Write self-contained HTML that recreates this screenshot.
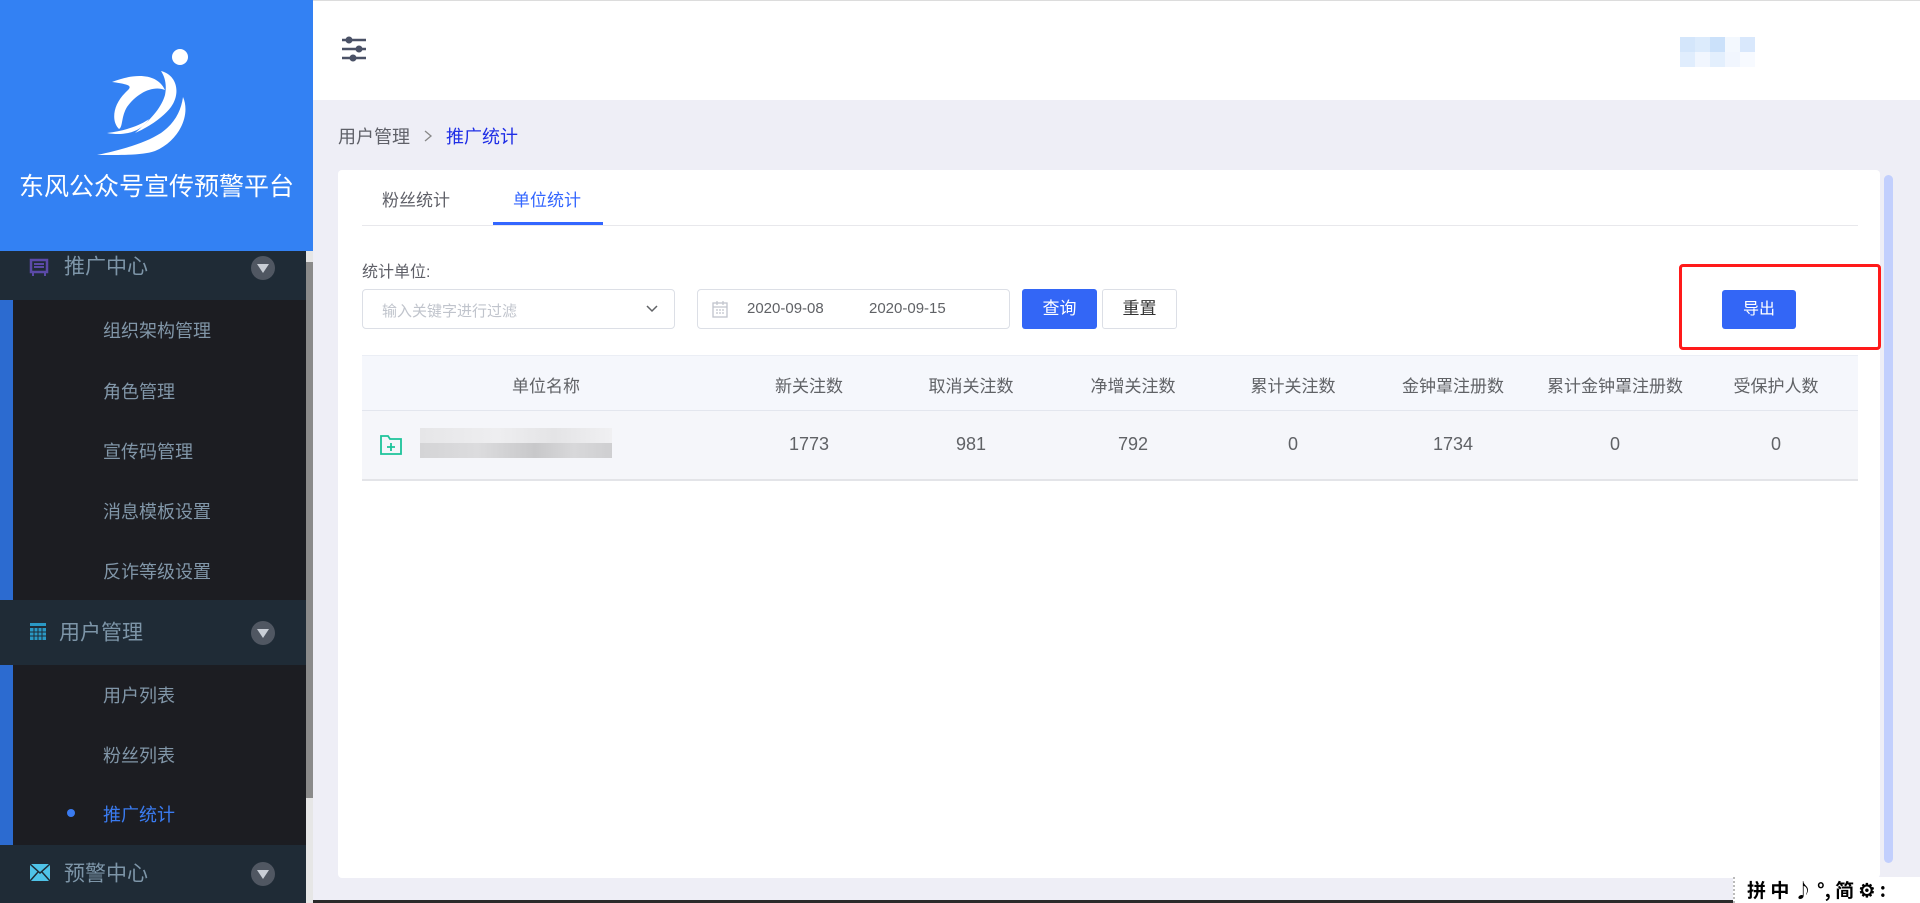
<!DOCTYPE html>
<html><head><meta charset="utf-8"><style>
*{margin:0;padding:0;box-sizing:border-box}
body{width:1920px;height:903px;overflow:hidden;background:#eeeef6;font-family:"Liberation Sans","Noto Sans CJK SC",sans-serif;position:relative}
.a{position:absolute}
.side{left:0;top:0;width:313px;height:903px;background:#1c1d22}
.logo{left:0;top:0;width:313px;height:251px;background:#3381f3}
.title{left:0;top:167px;width:313px;text-align:center;color:#fff;font-size:25px}
.grp{left:0;width:306px;background:#1f2b36;color:#7d95a8;font-size:21px}
.grp span{position:absolute;left:64px;top:50%;transform:translateY(-50%);line-height:1}
.arr{position:absolute;left:251px;top:50%;margin-top:-12px;width:24px;height:24px;border-radius:50%;background:#505762}
.arr:after{content:"";position:absolute;left:6px;top:8px;border-left:6px solid transparent;border-right:6px solid transparent;border-top:9px solid #c9ced6}
.bar{left:0;width:13px;background:#2c6bd0}
.it{left:103px;color:#8196a8;font-size:18px;transform:translateY(-50%)}
.card{left:338px;top:170px;width:1542px;height:708px;background:#fff;border-radius:4px}
.th{color:#606266;font-size:17px;text-align:center;transform:translateX(-50%);white-space:nowrap}
.btn{border-radius:3px;font-size:17px;text-align:center;line-height:39px}
</style></head><body>
<div class="a" style="left:0;top:0;width:1920px;height:1px;background:#dcdcdc"></div>
<div class="a side"></div>
<div class="a logo"></div>
<svg class="a" style="left:95px;top:45px" width="110" height="115" viewBox="0 0 110 115">
<circle cx="85" cy="12" r="8" fill="#fff"/>
<path d="M17 37 C40 28 62 28 70 45 C58 40 42 48 32 62 C26 72 28 82 24 84 C16 76 18 60 30 48 C36 42 40 40 17 37Z" fill="#fff"/>
<path d="M66 26 C82 30 86 48 76 62 C70 70 58 80 40 88 C54 76 66 64 70 50 C72 40 70 32 66 26Z" fill="#fff"/>
<path d="M88 52 C96 70 84 96 60 106 C48 110 34 110 2 110 C30 104 50 98 66 88 C80 78 86 66 88 52Z" fill="#fff"/>
<path d="M12 88 C30 86 46 80 54 74 C48 84 34 92 12 88Z" fill="#fff"/>
</svg>
<div class="a title">东风公众号宣传预警平台</div>
<div class="a" style="left:306px;top:251px;width:7px;height:652px;background:#e6e6e6"></div>
<div class="a" style="left:306px;top:262px;width:7px;height:536px;background:#8a8a8a"></div>

<div class="a grp" style="top:251px;height:49px"><svg class="a" style="left:29px;top:7px" width="20" height="20" viewBox="0 0 20 20"><rect x="2" y="2" width="16" height="12" fill="none" stroke="#5b4aa8" stroke-width="2.5"/><path d="M5 6h10M5 9h10M4 14v4M16 14v4" stroke="#5b4aa8" stroke-width="2"/></svg><span style="top:16px;transform:translateY(-50%)">推广中心</span><div class="arr" style="top:17px"></div></div>
<div class="a bar" style="top:300px;height:300px"></div>
<div class="a it" style="top:330px">组织架构管理</div>
<div class="a it" style="top:391px">角色管理</div>
<div class="a it" style="top:451px">宣传码管理</div>
<div class="a it" style="top:511px">消息模板设置</div>
<div class="a it" style="top:571px">反诈等级设置</div>
<div class="a grp" style="top:600px;height:65px"><svg class="a" style="left:30px;top:23px" width="16" height="17" viewBox="0 0 16 17"><rect x="0" y="0" width="16" height="3" fill="#2a98c4"/><rect x="0" y="5" width="16" height="12" fill="#2a98c4"/><path d="M0 9h16M0 13h16M4 5v12M8 5v12M12 5v12" stroke="#1f2b36" stroke-width="1"/></svg><span style="left:59px">用户管理</span><div class="arr"></div></div>
<div class="a bar" style="top:665px;height:180px"></div>
<div class="a it" style="top:695px">用户列表</div>
<div class="a it" style="top:755px">粉丝列表</div>
<div class="a" style="left:67px;top:809px;width:8px;height:8px;border-radius:50%;background:#3a7bf0"></div>
<div class="a it" style="top:814px;color:#3a7bf0">推广统计</div>
<div class="a grp" style="top:845px;height:58px"><svg class="a" style="left:30px;top:19px" width="20" height="17" viewBox="0 0 20 17"><rect width="20" height="17" fill="#4fc3e8"/><path d="M0 0L10 9L20 0M0 17L8 8M20 17L12 8" stroke="#1f2b36" stroke-width="1.5" fill="none"/></svg><span>预警中心</span><div class="arr"></div></div>

<div class="a" style="left:313px;top:1px;width:1607px;height:99px;background:#fff"></div>
<svg class="a" style="left:340px;top:36px" width="28" height="26" viewBox="0 0 28 26"><g stroke="#4a5166" stroke-width="2.5"><path d="M2 4h24M2 13h24M2 22h24"/></g><g fill="#4a5166"><circle cx="9" cy="4" r="3.5"/><circle cx="19" cy="13" r="3.5"/><circle cx="13" cy="22" r="3.5"/></g></svg>
<div class="a" style="left:1680px;top:37px;width:75px;height:15px;background:linear-gradient(90deg,#d4e6fb 0 20%,#dcebfc 20% 40%,#cbe1fa 40% 60%,#f3f8fe 60% 80%,#d9e8fc 80%)"></div>
<div class="a" style="left:1680px;top:52px;width:75px;height:15px;background:linear-gradient(90deg,#e0edfd 0 20%,#f1f6fe 20% 40%,#e3effd 40% 60%,#f1f6fe 60% 80%,#f7faff 80%)"></div>

<div class="a" style="left:338px;top:123px;font-size:18px;color:#5f6068">用户管理 <svg width="14" height="14" viewBox="0 0 14 14" style="margin:0 6px"><path d="M4 2l6 5-6 5" stroke="#888" stroke-width="1.3" fill="none"/></svg> <span style="color:#1f2ee6">推广统计</span></div>

<div class="a card"></div>
<div class="a" style="left:1884px;top:175px;width:9px;height:688px;border-radius:5px;background:#c2cffd"></div>
<div class="a" style="left:382px;top:186px;font-size:17px;color:#5f6068">粉丝统计</div>
<div class="a" style="left:513px;top:186px;font-size:17px;color:#3366ff">单位统计</div>
<div class="a" style="left:362px;top:225px;width:1496px;height:1px;background:#e8e8ec"></div>
<div class="a" style="left:493px;top:222px;width:110px;height:3px;background:#3366ff"></div>
<div class="a" style="left:362px;top:258px;font-size:16px;color:#5f6068">统计单位:</div>
<div class="a" style="left:362px;top:289px;width:313px;height:40px;border:1px solid #dcdfe6;border-radius:4px"></div>
<div class="a" style="left:382px;top:300px;font-size:15px;color:#c0c4cc">输入关键字进行过滤</div>
<svg class="a" style="left:646px;top:304px" width="12" height="10" viewBox="0 0 12 10"><path d="M1 2l5 5 5-5" stroke="#606266" stroke-width="1.5" fill="none"/></svg>
<div class="a" style="left:697px;top:289px;width:313px;height:40px;border:1px solid #dcdfe6;border-radius:4px"></div>
<svg class="a" style="left:712px;top:300px" width="16" height="18" viewBox="0 0 16 18"><rect x="1" y="3" width="14" height="14" fill="none" stroke="#c0c4cc" stroke-width="1.3"/><path d="M1 7h14M5 1v4M11 1v4M4 10h2M7 10h2M10 10h2M4 13h2M7 13h2M10 13h2" stroke="#c0c4cc" stroke-width="1.2"/></svg>
<div class="a" style="left:747px;top:300px;font-size:15px;color:#606266">2020-09-08</div>
<div class="a" style="left:869px;top:300px;font-size:15px;color:#606266">2020-09-15</div>
<div class="a btn" style="left:1022px;top:289px;width:75px;height:40px;background:#3366f6;color:#fff">查询</div>
<div class="a btn" style="left:1102px;top:289px;width:75px;height:40px;border:1px solid #dcdfe6;color:#333;line-height:38px">重置</div>
<div class="a" style="left:1679px;top:264px;width:202px;height:86px;border:3px solid #ff1a1a;border-radius:4px"></div>
<div class="a btn" style="left:1722px;top:290px;width:74px;height:39px;background:#3366f6;color:#fff;font-size:16px">导出</div>

<div class="a" style="left:362px;top:355px;width:1496px;height:56px;background:#f5f7fc;border-top:1px solid #ebeef5;border-bottom:1px solid #e3e6ee"></div>
<div class="a" style="left:362px;top:411px;width:1496px;height:70px;background:#f5f6fa;border-bottom:2px solid #e3e4e8"></div>
<div class="a th" style="left:546px;top:372px">单位名称</div>
<div class="a th" style="left:809px;top:372px">新关注数</div>
<div class="a th" style="left:971px;top:372px">取消关注数</div>
<div class="a th" style="left:1133px;top:372px">净增关注数</div>
<div class="a th" style="left:1293px;top:372px">累计关注数</div>
<div class="a th" style="left:1453px;top:372px">金钟罩注册数</div>
<div class="a th" style="left:1615px;top:372px">累计金钟罩注册数</div>
<div class="a th" style="left:1776px;top:372px">受保护人数</div>
<svg class="a" style="left:380px;top:435px" width="22" height="20" viewBox="0 0 22 20"><path d="M1 1h7l2 3h11v15H1z" fill="none" stroke="#1cc39a" stroke-width="1.8"/><path d="M11 8v8M7 12h8" stroke="#1cc39a" stroke-width="1.8"/></svg>
<div class="a" style="left:420px;top:428px;width:192px;height:15px;background:linear-gradient(90deg,#e6e6e8,#eeeef0 40%,#e4e4e6 70%,#f0f0f2)"></div>
<div class="a" style="left:420px;top:443px;width:192px;height:15px;background:linear-gradient(90deg,#d4d4d6,#dcdcde 30%,#c8c8ca 60%,#d8d8da 80%,#cfcfd1)"></div>
<div class="a th" style="left:809px;top:434px;font-size:18px">1773</div>
<div class="a th" style="left:971px;top:434px;font-size:18px">981</div>
<div class="a th" style="left:1133px;top:434px;font-size:18px">792</div>
<div class="a th" style="left:1293px;top:434px;font-size:18px">0</div>
<div class="a th" style="left:1453px;top:434px;font-size:18px">1734</div>
<div class="a th" style="left:1615px;top:434px;font-size:18px">0</div>
<div class="a th" style="left:1776px;top:434px;font-size:18px">0</div>

<div class="a" style="left:313px;top:900px;width:1420px;height:3px;background:#2a2a2a"></div>
<div class="a" style="left:1733px;top:877px;width:187px;height:26px;background:#fff;border-left:2px dotted #bbb;font-size:19px;font-weight:bold;color:#000;line-height:26px;padding-left:12px;white-space:nowrap;font-family:'Noto Sans CJK SC',sans-serif">拼 中 ♪ °, 简 ⚙ :</div>
</body></html>
